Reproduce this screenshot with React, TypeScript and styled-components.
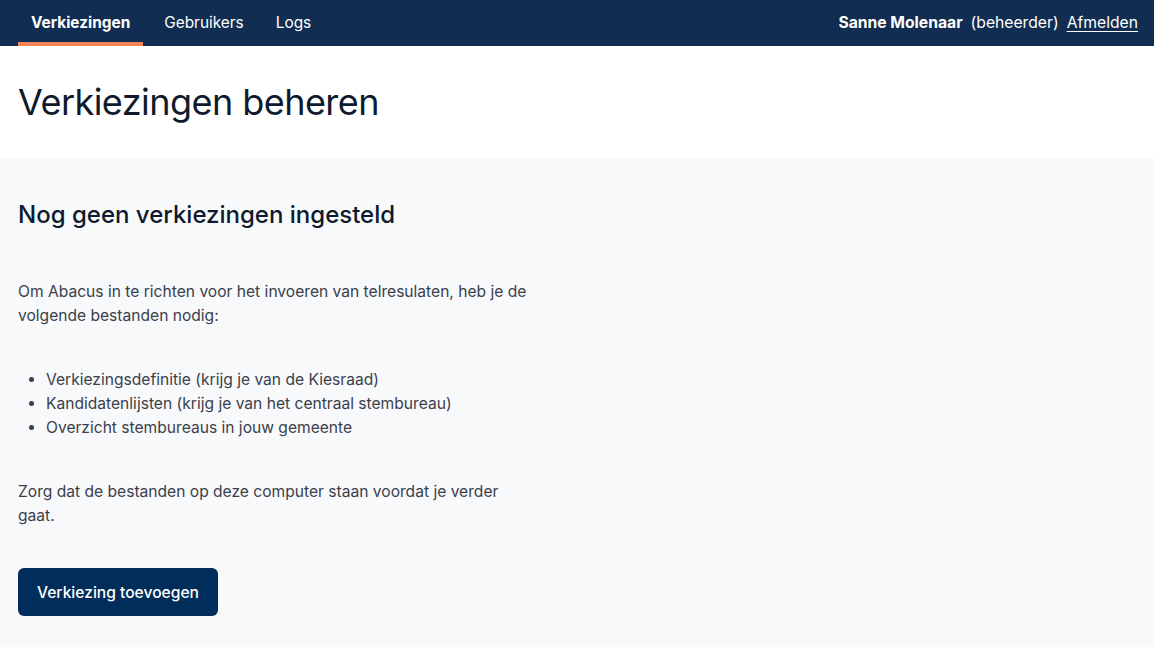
import React from "react";
import styled, { createGlobalStyle } from "styled-components";

const Global = createGlobalStyle`
  html, body { margin: 0; padding: 0; }
  body {
    font-family: Inter, "Noto Sans", sans-serif;
    background: #f8f9fb;
    color: #1a2233;
  }
  * { box-sizing: border-box; }
`;

const Nav = styled.nav`
  height: 46px;
  background: #112d51;
  display: flex;
  align-items: stretch;
  justify-content: space-between;
  padding: 0 16px 0 18px;
  color: #fff;
  font-size: 15.4px;
`;

const NavLinks = styled.div`
  display: flex;
  align-items: stretch;
`;

const NavLink = styled.a<{ $active?: boolean }>`
  display: flex;
  align-items: center;
  padding: ${(p) => (p.$active ? "0 13px 0 13px" : "0 16px")};
  margin-right: ${(p) => (p.$active ? "5px" : "0")};
  color: #fff;
  text-decoration: none;
  font-weight: ${(p) => (p.$active ? 700 : 400)};
  border-bottom: 4px solid ${(p) => (p.$active ? "#f18556" : "transparent")};
  border-top: 2px solid transparent;
`;

const User = styled.div`
  display: flex;
  align-items: center;
  gap: 8px;
  padding-bottom: 2px;
  font-size: 15.7px;
`;

const UserName = styled.strong`
  font-weight: 700;
`;

const Logout = styled.a`
  color: #fff;
  text-decoration: underline;
  text-underline-offset: 3px;
`;

const Header = styled.header`
  background: #fff;
  height: 112px;
  display: flex;
  align-items: center;
  padding: 0 18px;
`;

const Title = styled.h1`
  margin: 0;
  font-size: 36px;
  font-weight: 400;
  color: #0f1a2e;
  letter-spacing: -0.55px;
`;

const Main = styled.main`
  padding: 42px 18px 30px;
`;

const SubTitle = styled.h2`
  margin: 0 0 50px;
  font-size: 24px;
  font-weight: 500;
  color: #0f1a2e;
  line-height: 30px;
`;

const Paragraph = styled.p`
  margin: 0 0 40px;
  font-size: 15.6px;
  line-height: 24px;
  color: #3a3f4b;
  max-width: 515px;
`;

const List = styled.ul`
  margin: 0 0 40px;
  padding-left: 28px;
  font-size: 15.6px;
  line-height: 24px;
  color: #3a3f4b;
`;

const Button = styled.button`
  display: block;
  height: 48px;
  padding: 0 19px;
  border: none;
  border-radius: 6px;
  background: #002d5a;
  color: #fff;
  font-family: inherit;
  font-size: 15.6px;
  font-weight: 500;
`;

export default function App() {
  return (
    <>
      <Global />
      <Nav>
        <NavLinks>
          <NavLink $active>Verkiezingen</NavLink>
          <NavLink>Gebruikers</NavLink>
          <NavLink>Logs</NavLink>
        </NavLinks>
        <User>
          <UserName>Sanne Molenaar</UserName>
          <span>(beheerder)</span>
          <Logout>Afmelden</Logout>
        </User>
      </Nav>
      <Header>
        <Title>Verkiezingen beheren</Title>
      </Header>
      <Main>
        <SubTitle>Nog geen verkiezingen ingesteld</SubTitle>
        <Paragraph>
          Om Abacus in te richten voor het invoeren van telresulaten, heb je de
          volgende bestanden nodig:
        </Paragraph>
        <List>
          <li>Verkiezingsdefinitie (krijg je van de Kiesraad)</li>
          <li>Kandidatenlijsten (krijg je van het centraal stembureau)</li>
          <li>Overzicht stembureaus in jouw gemeente</li>
        </List>
        <Paragraph>
          Zorg dat de bestanden op deze computer staan voordat je verder gaat.
        </Paragraph>
        <Button>Verkiezing toevoegen</Button>
      </Main>
    </>
  );
}
